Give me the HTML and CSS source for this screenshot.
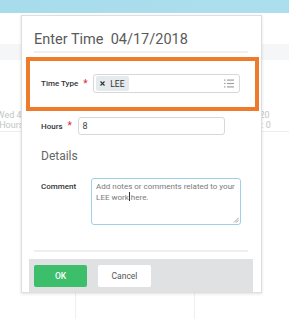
FILE: index.html
```html
<!DOCTYPE html>
<html>
<head>
<meta charset="utf-8">
<link rel="stylesheet" href="styles.css">
</head>
<body>
<div class="page">
  <div class="topbar"></div>
  <div class="subbar"></div>
  <div class="band"></div>
  <div class="week">
    <div class="day"><div class="day-head"><div>Wed 4/18</div><div>Hours: 0</div></div></div>
    <div class="day"><div class="day-head"><div>Thu 4/19</div><div>Hours: 0</div></div></div>
    <div class="day"><div class="day-head"><div>Fri 4/20</div><div>Hours: 0</div></div></div>
  </div>
</div>

<div class="dialog">
  <div class="content">
    <div class="title">Enter Time&nbsp; 04/17/2018</div>
    <div class="sep"></div>
    <div class="highlight">
      <div class="row">
        <span class="label">Time Type</span><span class="star">*</span>
        <div class="input select">
          <span class="chip">
            <svg class="x" width="5" height="5" viewBox="0 0 5 5"><path d="M0.5 0.5L4.5 4.5M4.5 0.5L0.5 4.5" stroke="#333" stroke-width="1.1"/></svg>
            <span>LEE</span>
          </span>
          <svg class="list" width="10" height="9" viewBox="0 0 10 9">
            <rect x="0" y="0.5" width="1.5" height="1.2" fill="#a0a0a0"/>
            <rect x="3" y="0.5" width="7" height="1.2" fill="#a0a0a0"/>
            <rect x="0" y="3.9" width="1.5" height="1.2" fill="#a0a0a0"/>
            <rect x="3" y="3.9" width="7" height="1.2" fill="#a0a0a0"/>
            <rect x="0" y="7.3" width="1.5" height="1.2" fill="#a0a0a0"/>
            <rect x="3" y="7.3" width="7" height="1.2" fill="#a0a0a0"/>
          </svg>
        </div>
      </div>
    </div>
    <div class="row hours">
      <span class="label">Hours</span><span class="star">*</span>
      <div class="input text">8</div>
    </div>
    <div class="details">Details</div>
    <div class="row comment">
      <span class="label">Comment</span><span class="star hidden">*</span>
      <div class="textarea">
        Add notes or comments related to your<br>LEE work<span class="caret"></span>here.
        <svg class="grip" width="6" height="6" viewBox="0 0 6 6"><path d="M1 5.5L5.5 1M3.2 5.5L5.5 3.2" stroke="#888" stroke-width="0.8"/></svg>
      </div>
    </div>
    <div class="sep bottom"></div>
    <div class="footer">
      <button class="btn ok">OK</button>
      <button class="btn cancel">Cancel</button>
    </div>
  </div>
</div>
</body>
</html>
```
FILE: styles.css
```css
html, body {
  margin: 0;
  padding: 0;
}
body {
  width: 289px;
  height: 319px;
  overflow: hidden;
  position: relative;
  background: #fff;
  font-family: Roboto, "Liberation Sans", sans-serif;
}
.page {
  display: flex;
  flex-direction: column;
  height: 319px;
}
.topbar {
  height: 13px;
  background: linear-gradient(90deg, #a7dcec, #acdfee);
}
.subbar {
  height: 31px;
  background: #fff;
}
.band {
  height: 16px;
  background: #f5f6f7;
}
.week {
  flex: 1;
  display: grid;
  grid-template-columns: 119px 119px 119px;
  margin-left: -43px;
}
.day {
  border-right: 1px solid #efefef;
}
.day-head {
  padding-top: 50px;
  height: 72px;
  box-sizing: border-box;
  border-bottom: 1px solid #eeeeee;
  text-align: center;
  font-size: 9px;
  line-height: 10px;
  color: #c4c4c4;
}

.dialog {
  position: absolute;
  left: 21px;
  top: 15px;
  width: 241px;
  height: 278px;
  box-sizing: border-box;
  background: #fff;
  border: 1px solid #dedede;
  box-shadow: 0 1px 3px rgba(0, 0, 0, 0.12);
}
.content {
  padding: 0 13px 0 12px;
  display: flex;
  flex-direction: column;
}
.title {
  margin-top: 14px;
  height: 20px;
  line-height: 20px;
  font-size: 14.5px;
  color: #5a5a5a;
}
.sep {
  margin-top: 1px;
  height: 2px;
  background: #efefef;
}
.highlight {
  margin: 4px -11px 0 -8px;
  border: 4px solid #ee7a2c;
  padding: 13px 0 14px 11px;
}
.row {
  display: flex;
  align-items: center;
}
.label {
  font-size: 8px;
  font-weight: 500;
  color: #333;
}
.star {
  color: #e3262b;
  font-size: 10px;
  line-height: 8px;
  margin-left: 5px;
  width: 6px;
  margin-right: 4px;
}
.star.hidden {
  visibility: hidden;
}
.input {
  box-sizing: border-box;
  border: 1px solid #d8d8d8;
  border-radius: 3px;
  display: flex;
  align-items: center;
}
.select {
  width: 147px;
  height: 19px;
  padding: 0 5px 0 2px;
  justify-content: space-between;
}
.chip {
  display: flex;
  align-items: center;
  height: 15px;
  padding: 0 4px;
  background: #e5eaed;
  border-radius: 2px;
  font-size: 8.5px;
  color: #333;
}
.chip .x {
  margin-right: 5px;
}
.hours {
  margin-top: 6px;
  padding-left: 7px;
}
.text {
  width: 147px;
  height: 18px;
  padding-left: 4px;
  font-size: 9px;
  color: #444;
}
.details {
  margin-top: 13px;
  padding-left: 7px;
  font-size: 12px;
  line-height: 16px;
  color: #666;
}
.comment {
  margin-top: 14px;
  padding-left: 7px;
  align-items: flex-start;
}
.comment .label {
  padding-top: 4px;
}
.textarea {
  position: relative;
  box-sizing: border-box;
  width: 150px;
  height: 47px;
  border: 1px solid #9fd0e9;
  border-radius: 3px;
  padding: 3px 4px;
  font-size: 8px;
  line-height: 10px;
  color: #7a7a7a;
  white-space: nowrap;
}
.caret {
  display: inline-block;
  width: 1px;
  height: 9px;
  background: #333;
  vertical-align: -1px;
  margin: 0 0.5px;
}
.grip {
  position: absolute;
  right: 1px;
  bottom: 1px;
}
.sep.bottom {
  margin-top: 25px;
}
.footer {
  margin: 7px -5px 0 -5px;
  height: 33px;
  box-sizing: border-box;
  background: #dfe1e3;
  padding: 6px 5px 0;
  display: flex;
  gap: 11px;
}
.btn {
  width: 53px;
  height: 22px;
  border: none;
  border-radius: 2px;
  font-family: Roboto, "Liberation Sans", sans-serif;
  font-size: 8.5px;
  padding: 0;
}
.ok {
  background: #3dbe6a;
  color: #fff;
  font-weight: 500;
}
.cancel {
  background: #fff;
  color: #555;
}
```
